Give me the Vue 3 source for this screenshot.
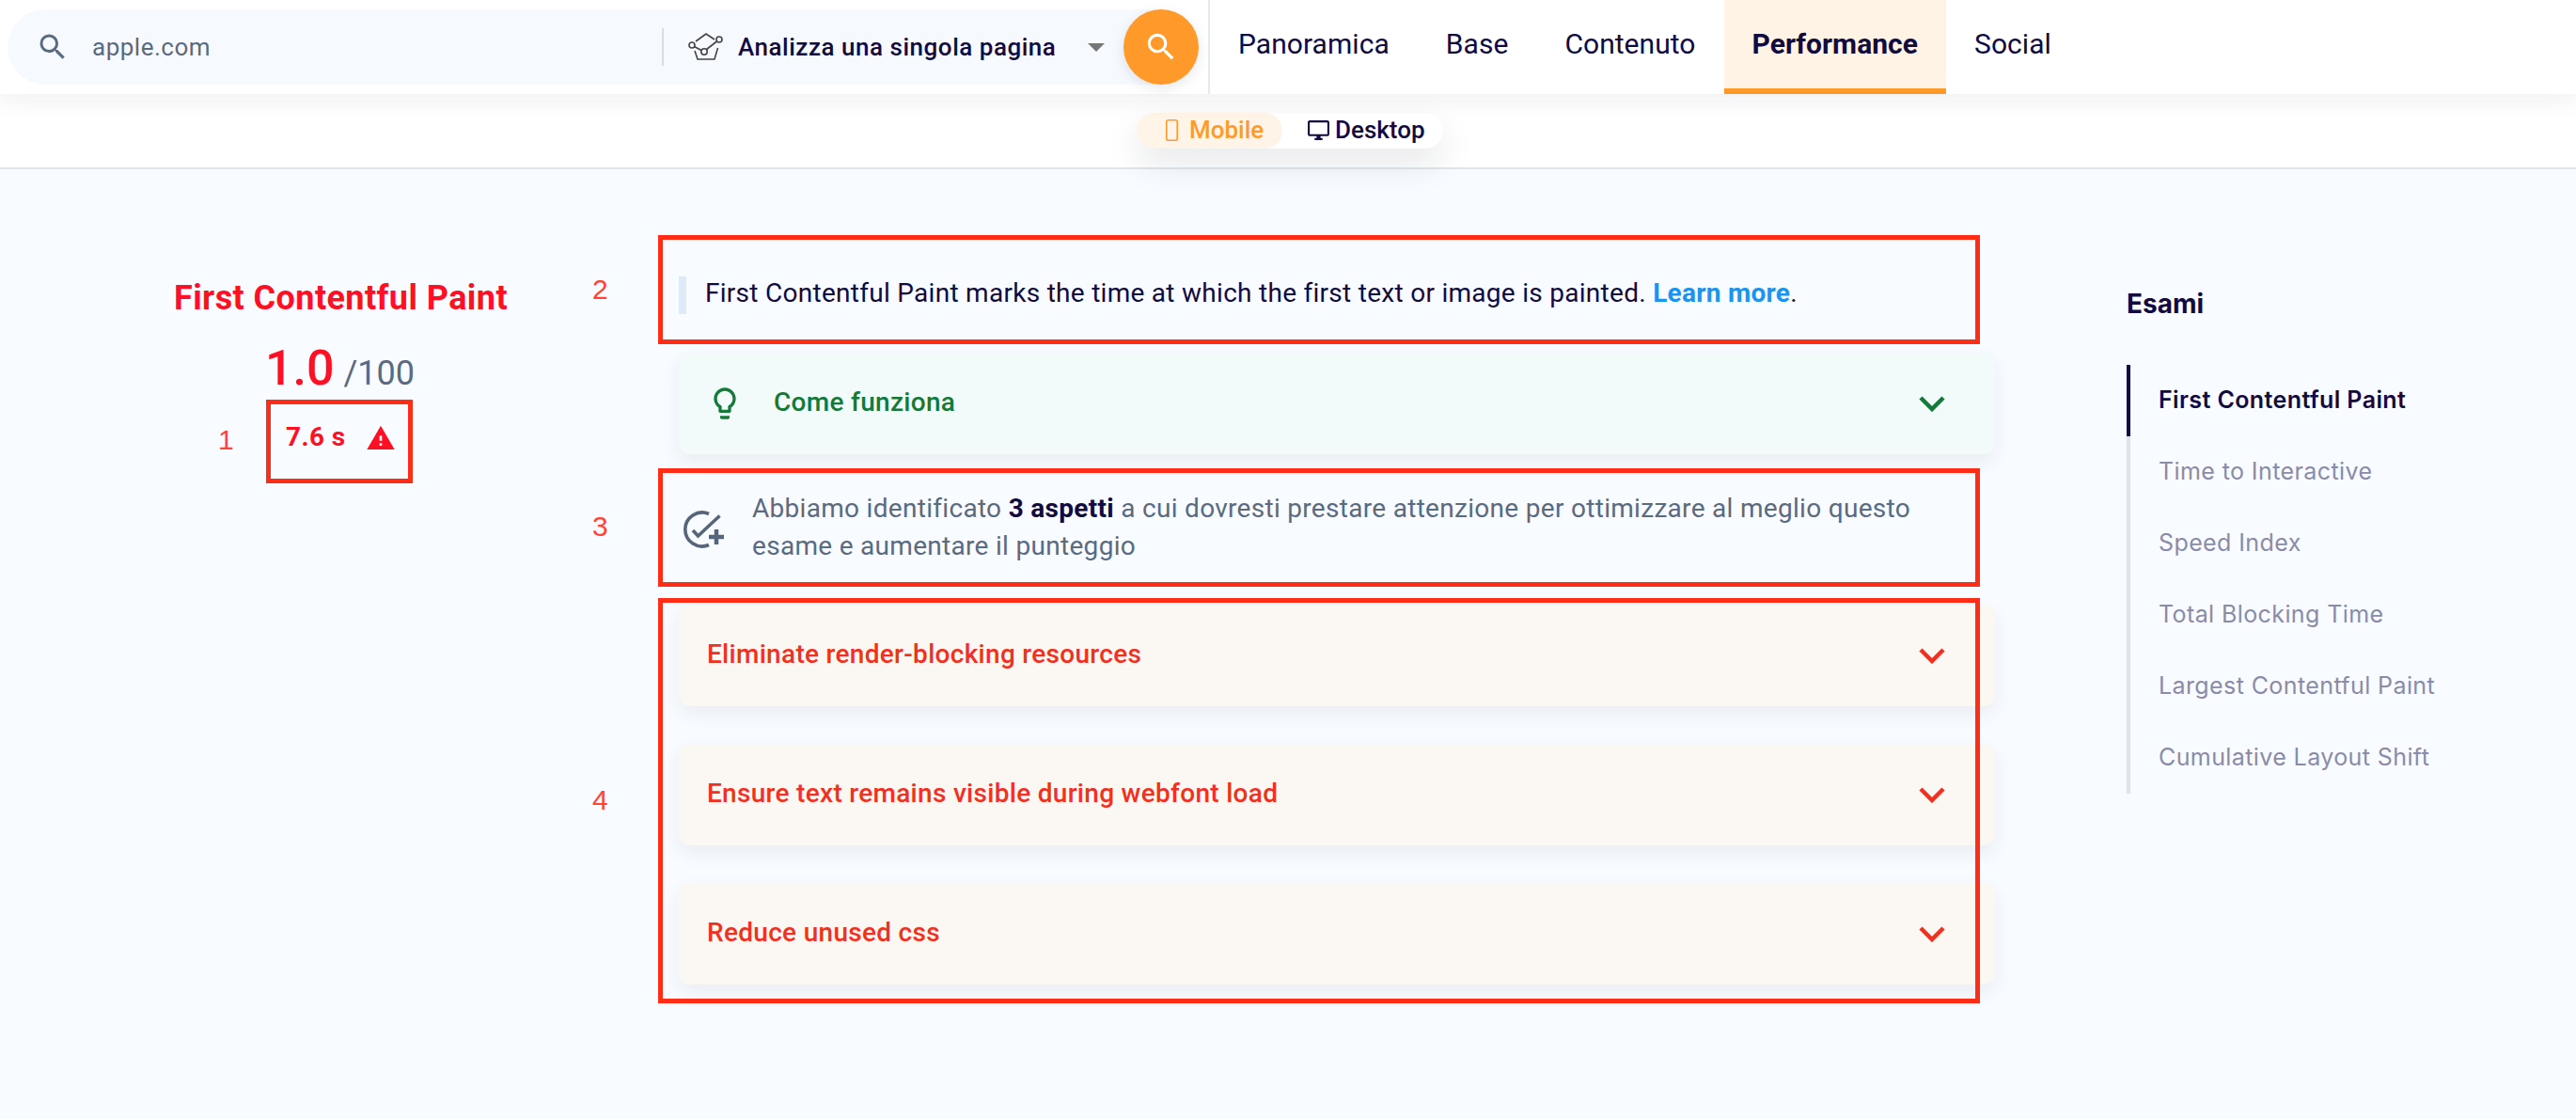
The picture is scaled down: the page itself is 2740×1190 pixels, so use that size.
<script setup>
const tabs = ['Panoramica', 'Base', 'Contenuto', 'Performance', 'Social']
const audits = [
  'First Contentful Paint',
  'Time to Interactive',
  'Speed Index',
  'Total Blocking Time',
  'Largest Contentful Paint',
  'Cumulative Layout Shift'
]
const issues = [
  'Eliminate render-blocking resources',
  'Ensure text remains visible during webfont load',
  'Reduce unused css'
]
const searchPath = 'M15.5 14h-.79l-.28-.27A6.471 6.471 0 0 0 16 9.5 6.5 6.5 0 1 0 9.5 16c1.61 0 3.09-.59 4.23-1.57l.27.28v.79l5 4.99L20.49 19l-4.99-5zm-6 0C7.01 14 5 11.99 5 9.5S7.01 5 9.5 5 14 7.01 14 9.5 11.99 14 9.5 14z'
</script>

<template>
  <div class="page">
    <header class="top">
      <div class="search">
        <svg class="search-ico" viewBox="0 0 24 24"><path :d="searchPath" /></svg>
        <span class="domain">apple.com</span>
        <div class="mode">
          <svg class="basket" viewBox="0 0 50 40">
            <path d="M13 14 L24 6 L33 12 M12 24 L15 33 H33 L36.5 21 M11.5 19.5 L19 23.5 M24.5 22.5 L35.5 14" />
            <circle cx="9" cy="18" r="3" />
            <circle cx="22" cy="25" r="3.2" />
            <circle cx="38" cy="12" r="3" />
          </svg>
          <span class="mode-label">Analizza una singola pagina</span>
          <span class="caret"></span>
        </div>
        <button class="go">
          <svg viewBox="0 0 24 24"><path :d="searchPath" /></svg>
        </button>
      </div>
      <nav class="tabs">
        <a v-for="t in tabs" :key="t" class="tab" :class="{ on: t === 'Performance' }">{{ t }}</a>
      </nav>
    </header>

    <div class="subbar">
      <div class="toggle">
        <div class="opt mobile">
          <svg class="phone" viewBox="0 0 13 23"><rect x="0.8" y="0.8" width="11.4" height="21.4" rx="2" /></svg>
          <span>Mobile</span>
        </div>
        <div class="opt desktop">
          <svg class="monitor" viewBox="0 0 24 24"><path d="M21 2H3c-1.1 0-2 .9-2 2v12c0 1.1.9 2 2 2h7v2H8v2h8v-2h-2v-2h7c1.1 0 2-.9 2-2V4c0-1.1-.9-2-2-2zm0 14H3V4h18v12z" /></svg>
          <span>Desktop</span>
        </div>
      </div>
    </div>

    <main class="main">
      <section class="score">
        <h1>First Contentful Paint</h1>
        <div class="value"><b>1.0</b><span>/100</span></div>
        <div class="metric mark">
          <i class="num n1">1</i>
          <strong>7.6 s</strong>
          <svg class="warn" viewBox="0 0 24 24"><path d="M1 21h22L12 2 1 21zm12-3h-2v-2h2v2zm0-4h-2v-4h2v4z" /></svg>
        </div>
      </section>

      <section class="center">
        <div class="intro mark">
          <i class="num n2">2</i>
          <p>First Contentful Paint marks the time at which the first text or image is painted. <a>Learn more</a>.</p>
        </div>
        <div class="card how">
          <svg class="bulb" viewBox="0 0 24 24"><path d="M9 21c0 .55.45 1 1 1h4c.55 0 1-.45 1-1v-1H9v1zm3-19C8.14 2 5 5.14 5 9c0 2.38 1.19 4.47 3 5.74V17c0 .55.45 1 1 1h6c.55 0 1-.45 1-1v-2.26c1.81-1.27 3-3.36 3-5.74 0-3.86-3.14-7-7-7zm2.85 11.1l-.85.6V16h-4v-2.3l-.85-.6A4.997 4.997 0 0 1 7 9c0-2.76 2.24-5 5-5s5 2.24 5 5c0 1.63-.8 3.16-2.15 4.1z" /></svg>
          <span class="card-text">Come funziona</span>
          <svg class="chev" viewBox="0 0 28 17"><path d="M2 2 L14 14 L26 2" /></svg>
        </div>
        <div class="found mark">
          <i class="num n3">3</i>
          <svg class="checkplus" viewBox="0 0 60 55">
            <path class="arc" d="M34 10.5 A18 18 0 1 0 34 43.5" />
            <path class="arc" d="M17 28 L22.5 34 L45.5 12.5" />
            <path class="plus" d="M34 35 H50 M42 27 V43" />
          </svg>
          <p>Abbiamo identificato <b>3 aspetti</b> a cui dovresti prestare attenzione per ottimizzare al meglio questo esame e aumentare il punteggio</p>
        </div>
        <div class="issues mark">
          <i class="num n4">4</i>
          <div v-for="i in issues" :key="i" class="card issue">
            <span class="card-text">{{ i }}</span>
            <svg class="chev" viewBox="0 0 28 17"><path d="M2 2 L14 14 L26 2" /></svg>
          </div>
        </div>
      </section>

      <aside class="side">
        <h2>Esami</h2>
        <ul>
          <li v-for="(a, n) in audits" :key="a" :class="{ on: n === 0 }">{{ a }}</li>
        </ul>
      </aside>
    </main>
  </div>
</template>

<style>
html, body { margin: 0; background: #f8fbff; }
</style>

<style scoped>
.page {
  width: 2740px;
  height: 1190px;
  overflow: hidden;
  background: #f8fbff;
  font-family: Roboto, "Liberation Sans", sans-serif;
  color: #120b40;
}
.top {
  position: relative;
  z-index: 2;
  height: 100px;
  display: flex;
  background: #fff;
  box-shadow: 0 6px 24px rgba(20, 30, 50, 0.07);
}
.search {
  width: 1267px;
  height: 80px;
  margin: 10px 0 0 8px;
  display: flex;
  align-items: center;
  background: #f6f9fe;
  border-radius: 40px;
}
.search-ico {
  width: 36px;
  height: 36px;
  margin-left: 30px;
  fill: #5a6a80;
}
.domain {
  margin-left: 24px;
  width: 600px;
  font-size: 26px;
  color: #5a6a80;
  letter-spacing: 0.5px;
}
.mode {
  display: flex;
  align-items: center;
  height: 40px;
  border-left: 2px solid #d5dee5;
  margin-left: 6px;
}
.basket {
  width: 50px;
  height: 40px;
  margin-left: 21px;
  fill: none;
  stroke: #444;
  stroke-width: 1.6;
}
.mode-label {
  margin-left: 8px;
  font-size: 26px;
  font-weight: 500;
  letter-spacing: 0.52px;
}
.caret {
  margin-left: 34px;
  width: 0;
  height: 0;
  border-left: 9px solid transparent;
  border-right: 9px solid transparent;
  border-top: 9px solid #777;
}
.go {
  margin-left: auto;
  width: 80px;
  height: 80px;
  padding: 0;
  border: 0;
  border-radius: 50%;
  background: #ff9a2a;
  display: flex;
  align-items: center;
  justify-content: center;
  box-shadow: 0 4px 14px rgba(20, 30, 50, 0.1);
}
.go svg {
  width: 38px;
  height: 38px;
  fill: #fff;
}
.tabs {
  margin-left: 10px;
  padding-left: 2px;
  display: flex;
  box-shadow: inset 2px 0 0 #e3ebf2;
}
.tab {
  padding: 0 30px;
  box-sizing: border-box;
  height: 100px;
  line-height: 94px;
  font-size: 30px;
  letter-spacing: 0.05px;
  white-space: nowrap;
}
.tab.on {
  font-weight: 700;
  background: #fff3e5;
  border-bottom: 6px solid #ff9a2a;
}
.subbar {
  height: 78px;
  background: #fff;
  border-bottom: 2px solid #dfe7ea;
  padding-left: 1209px;
}
.toggle {
  position: relative;
  top: 20px;
  width: 326px;
  height: 38px;
  display: flex;
  background: #fff;
  border-radius: 19px;
  box-shadow: 0 16px 36px rgba(20, 30, 50, 0.1);
  font-size: 26px;
  font-weight: 500;
}
.opt {
  display: flex;
  align-items: center;
  padding-bottom: 2px;
  box-sizing: border-box;
}
.mobile {
  width: 155px;
  padding-left: 31px;
  background: #fff4e7;
  border-radius: 19px;
  color: #ff9a2a;
}
.phone {
  width: 13px;
  height: 23px;
  margin-right: 12px;
  fill: none;
  stroke: #ff9a2a;
  stroke-width: 1.6;
}
.desktop {
  padding-left: 26px;
}
.monitor {
  width: 25px;
  height: 25px;
  margin-right: 5px;
  fill: #120b40;
}
.main {
  display: flex;
  padding-top: 70px;
}
.score {
  width: 353px;
  margin-left: 186px;
  margin-right: 161px;
  display: flex;
  flex-direction: column;
  align-items: center;
}
.score h1 {
  margin: 43px 0 0;
  font-size: 36px;
  line-height: 48px;
  font-weight: 700;
  color: #ff0f24;
  letter-spacing: 0.42px;
  white-space: nowrap;
}
.value {
  margin: 21px 2px 0 0;
  height: 60px;
  display: flex;
  align-items: baseline;
  gap: 10px;
  white-space: nowrap;
}
.value b {
  font-size: 52px;
  line-height: 60px;
  font-weight: 500;
  color: #ff0f24;
}
.value span {
  font-size: 36px;
  color: #5a6a80;
}
.mark {
  position: relative;
  box-sizing: border-box;
}
.mark::after {
  content: "";
  position: absolute;
  inset: 0;
  border: 5px solid #ff2d16;
  pointer-events: none;
}
.num {
  position: absolute;
  left: -70px;
  font: 30px/30px "Liberation Sans", sans-serif;
  color: #ff4336;
}
.metric {
  width: 156px;
  height: 89px;
  margin: 3px 3px 0 0;
  padding: 19px 0 0 21px;
  display: flex;
  align-items: flex-start;
  color: #ff0f24;
}
.metric strong {
  font-size: 28px;
  line-height: 42px;
  font-weight: 700;
  letter-spacing: 0.4px;
}
.warn {
  width: 32px;
  height: 32px;
  margin-left: 21px;
  fill: #ff0f24;
  margin-top: 6px;
}
.n1 { left: -51px; top: 28px; }
.n2 { top: 43px; }
.n3 { top: 47px; }
.n4 { top: 200px; }
.center {
  width: 1406px;
  flex: none;
}
.intro {
  height: 116px;
  padding: 44px 0 0 22px;
}
.intro p {
  margin: 0;
  padding: 0 0 4px 20px;
  border-left: 8px solid #dfeaf8;
  font-size: 28px;
  line-height: 36px;
  letter-spacing: 0.28px;
}
.intro a {
  color: #1a94ee;
  font-weight: 700;
}
.card {
  width: 1400px;
  height: 108px;
  box-sizing: border-box;
  margin-left: 22px;
  border-radius: 12px;
  display: flex;
  align-items: center;
  box-shadow: 0 8px 20px rgba(40, 50, 90, 0.07);
  font-size: 28px;
  font-weight: 500;
}
.card-text {
  position: relative;
  top: -2px;
  letter-spacing: 0.3px;
}
.chev {
  width: 28px;
  height: 17px;
  margin-left: auto;
  margin-right: 53px;
  fill: none;
  stroke-width: 4.5;
}
.how {
  margin-top: 9px;
  background: #f2fbf9;
  color: #137a3a;
  padding-left: 29px;
}
.how .chev { stroke: #137a3a; }
.bulb {
  width: 40px;
  height: 40px;
  margin-right: 32px;
  fill: #137a3a;
}
.found {
  margin-top: 15px;
  height: 126px;
  padding: 23px 60px 0 20px;
  display: flex;
  align-items: flex-start;
}
.found p {
  margin: 0;
  font-size: 28px;
  line-height: 40px;
  letter-spacing: 0.3px;
  color: #5a6a80;
}
.found b {
  color: #120b40;
  font-weight: 700;
}
.checkplus {
  width: 60px;
  height: 55px;
  flex: none;
  margin: 15px 20px 0 0;
  fill: none;
  stroke: #56657b;
}
.arc { stroke-width: 3.6; }
.plus { stroke-width: 4.5; }
.issues {
  margin-top: 12px;
  height: 431px;
  padding-top: 7px;
  display: flex;
  flex-direction: column;
  gap: 40px;
}
.issue {
  flex: none;
  background: #fbf8f4;
  color: #f03020;
  padding-left: 30px;
}
.issue .chev { stroke: #f03020; }
.side {
  margin-left: 156px;
  font-family: Inter, Roboto, sans-serif;
}
.side h2 {
  margin: 53px 0 0;
  font-size: 28px;
  line-height: 40px;
  font-weight: 700;
}
.side ul {
  margin: 45px 0 0;
  padding: 0;
  list-style: none;
  border-left: 4px solid #e1e2ea;
}
.side li {
  height: 76px;
  box-sizing: border-box;
  line-height: 75px;
  padding-left: 30px;
  margin-left: -4px;
  border-left: 4px solid transparent;
  font-size: 25px;
  letter-spacing: 0.4px;
  color: #8a8ba8;
  white-space: nowrap;
}
.side li.on {
  border-left-color: #120b40;
  color: #120b40;
  font-weight: 600;
}
</style>
